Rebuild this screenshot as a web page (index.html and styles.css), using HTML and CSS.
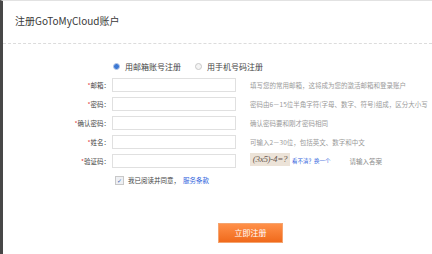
FILE: index.html
```html
<!DOCTYPE html>
<html lang="zh-CN">
<head>
<meta charset="utf-8">
<title>注册GoToMyCloud账户</title>
<link rel="stylesheet" href="styles.css">
</head>
<body>
<div class="page">
  <div class="header"><h1 class="title">注册GoToMyCloud账户</h1></div>
  <div class="tabs">
    <label class="radio"><span class="dot on"></span>用邮箱账号注册</label>
    <label class="radio"><span class="dot"></span>用手机号码注册</label>
  </div>
  <div class="form">
    <div class="row">
      <span class="lbl"><i class="req">*</i>邮箱：</span>
      <span class="inp"></span>
      <span class="hint">填写您的常用邮箱，这将成为您的激活邮箱和登录账户</span>
    </div>
    <div class="row">
      <span class="lbl"><i class="req">*</i>密码：</span>
      <span class="inp"></span>
      <span class="hint">密码由6－15位半角字符(字母、数字、符号)组成，区分大小写</span>
    </div>
    <div class="row">
      <span class="lbl"><i class="req">*</i>确认密码：</span>
      <span class="inp"></span>
      <span class="hint">确认密码要和刚才密码相同</span>
    </div>
    <div class="row">
      <span class="lbl"><i class="req">*</i>姓名：</span>
      <span class="inp"></span>
      <span class="hint">可输入2－30位，包括英文、数字和中文</span>
    </div>
    <div class="row">
      <span class="lbl"><i class="req">*</i>验证码：</span>
      <span class="inp"></span>
      <span class="captcha-wrap">
        <span class="captcha">(3x5)-4=?</span>
        <a class="link">看不清？换一个</a>
        <span class="answer">请输入答案</span>
      </span>
    </div>
    <div class="agree">
      <span class="check">✓</span>
      <span class="agree-text">我已阅读并同意，</span><a class="link terms">服务条款</a>
    </div>
    <div class="actions">
      <button class="btn">立即注册</button>
    </div>
  </div>
</div>
</body>
</html>
```
FILE: styles.css
```css
html, body {
  margin: 0;
  padding: 0;
  background: #fff;
}
body {
  font-family: "Noto Sans CJK SC", "Liberation Sans", sans-serif;
  color: #333;
}
.page {
  width: 429px;
  height: 253px;
  border-left: 3px solid #474747;
  border-top: 1px solid #e2e2e2;
  overflow: hidden;
}
.header {
  height: 43px;
  border-bottom: 1px dashed #dcdcdc;
  display: flex;
  align-items: center;
  padding-left: 12px;
  box-sizing: border-box;
}
.title {
  margin: 0;
  margin-top: -4px;
  font-size: 10px;
  font-weight: normal;
  color: #3a3a3a;
  font-family: "Noto Sans CJK SC", "Liberation Sans", sans-serif;
}
.tabs {
  display: flex;
  gap: 14px;
  padding-left: 110px;
  margin-top: 16px;
  height: 12px;
  align-items: center;
}
.radio {
  display: flex;
  align-items: center;
  gap: 5px;
  font-size: 8px;
  color: #444;
}
.dot {
  width: 5px;
  height: 5px;
  border-radius: 50%;
  border: 1px solid #c8c8c8;
  background: #f4f4f4;
  box-sizing: content-box;
}
.dot.on {
  background: #3b78d4;
  border-color: #b9c9e6;
}
.form {
  margin-top: 6px;
  display: flex;
  flex-direction: column;
  gap: 5px;
}
.row {
  display: flex;
  align-items: center;
  height: 14px;
}
.lbl {
  width: 107px;
  text-align: right;
  font-size: 6.5px;
  color: #444;
  padding-right: 2px;
}
.req {
  color: #e23b3b;
  font-style: normal;
}
.inp {
  width: 124px;
  height: 14px;
  border: 1px solid #e0e0e0;
  box-sizing: border-box;
  background: #fff;
  flex: none;
}
.hint {
  margin-left: 14px;
  font-size: 6.5px;
  color: #9a9a9a;
  white-space: nowrap;
}
.captcha-wrap {
  margin-left: 14px;
  display: flex;
  align-items: center;
  white-space: nowrap;
}
.captcha {
  width: 40px;
  height: 13px;
  margin-top: -4px;
  background: #ece3d8;
  font-family: "Liberation Serif", "DejaVu Serif", serif;
  font-style: italic;
  font-size: 9px;
  line-height: 13px;
  color: #6b5a52;
  text-align: center;
  letter-spacing: -0.3px;
}
.link {
  color: #3366dd;
  font-size: 5.5px;
  margin-left: 2px;
}
.answer {
  margin-left: 19px;
  font-size: 6.5px;
  color: #888;
}
.agree {
  display: flex;
  align-items: center;
  padding-left: 112px;
  height: 12px;
  margin-top: 1px;
}
.check {
  width: 7px;
  height: 7px;
  border: 1px solid #c8c8c8;
  background: #eef0f4;
  color: #3b5fb0;
  font-size: 6px;
  line-height: 7px;
  text-align: center;
  margin-right: 4px;
  font-family: "DejaVu Sans", sans-serif;
}
.agree-text {
  font-size: 6.5px;
  color: #444;
}
.terms {
  font-size: 6.5px;
  margin-left: 3px;
}
.actions {
  padding-left: 215px;
  margin-top: 26px;
}
.btn {
  width: 65px;
  height: 20px;
  border: 1px solid #f5a46f;
  background: linear-gradient(#ff9049, #f06a1c);
  color: #fff;
  font-size: 8px;
  font-family: "Noto Sans CJK SC", sans-serif;
  padding: 0;
  cursor: pointer;
}
```
